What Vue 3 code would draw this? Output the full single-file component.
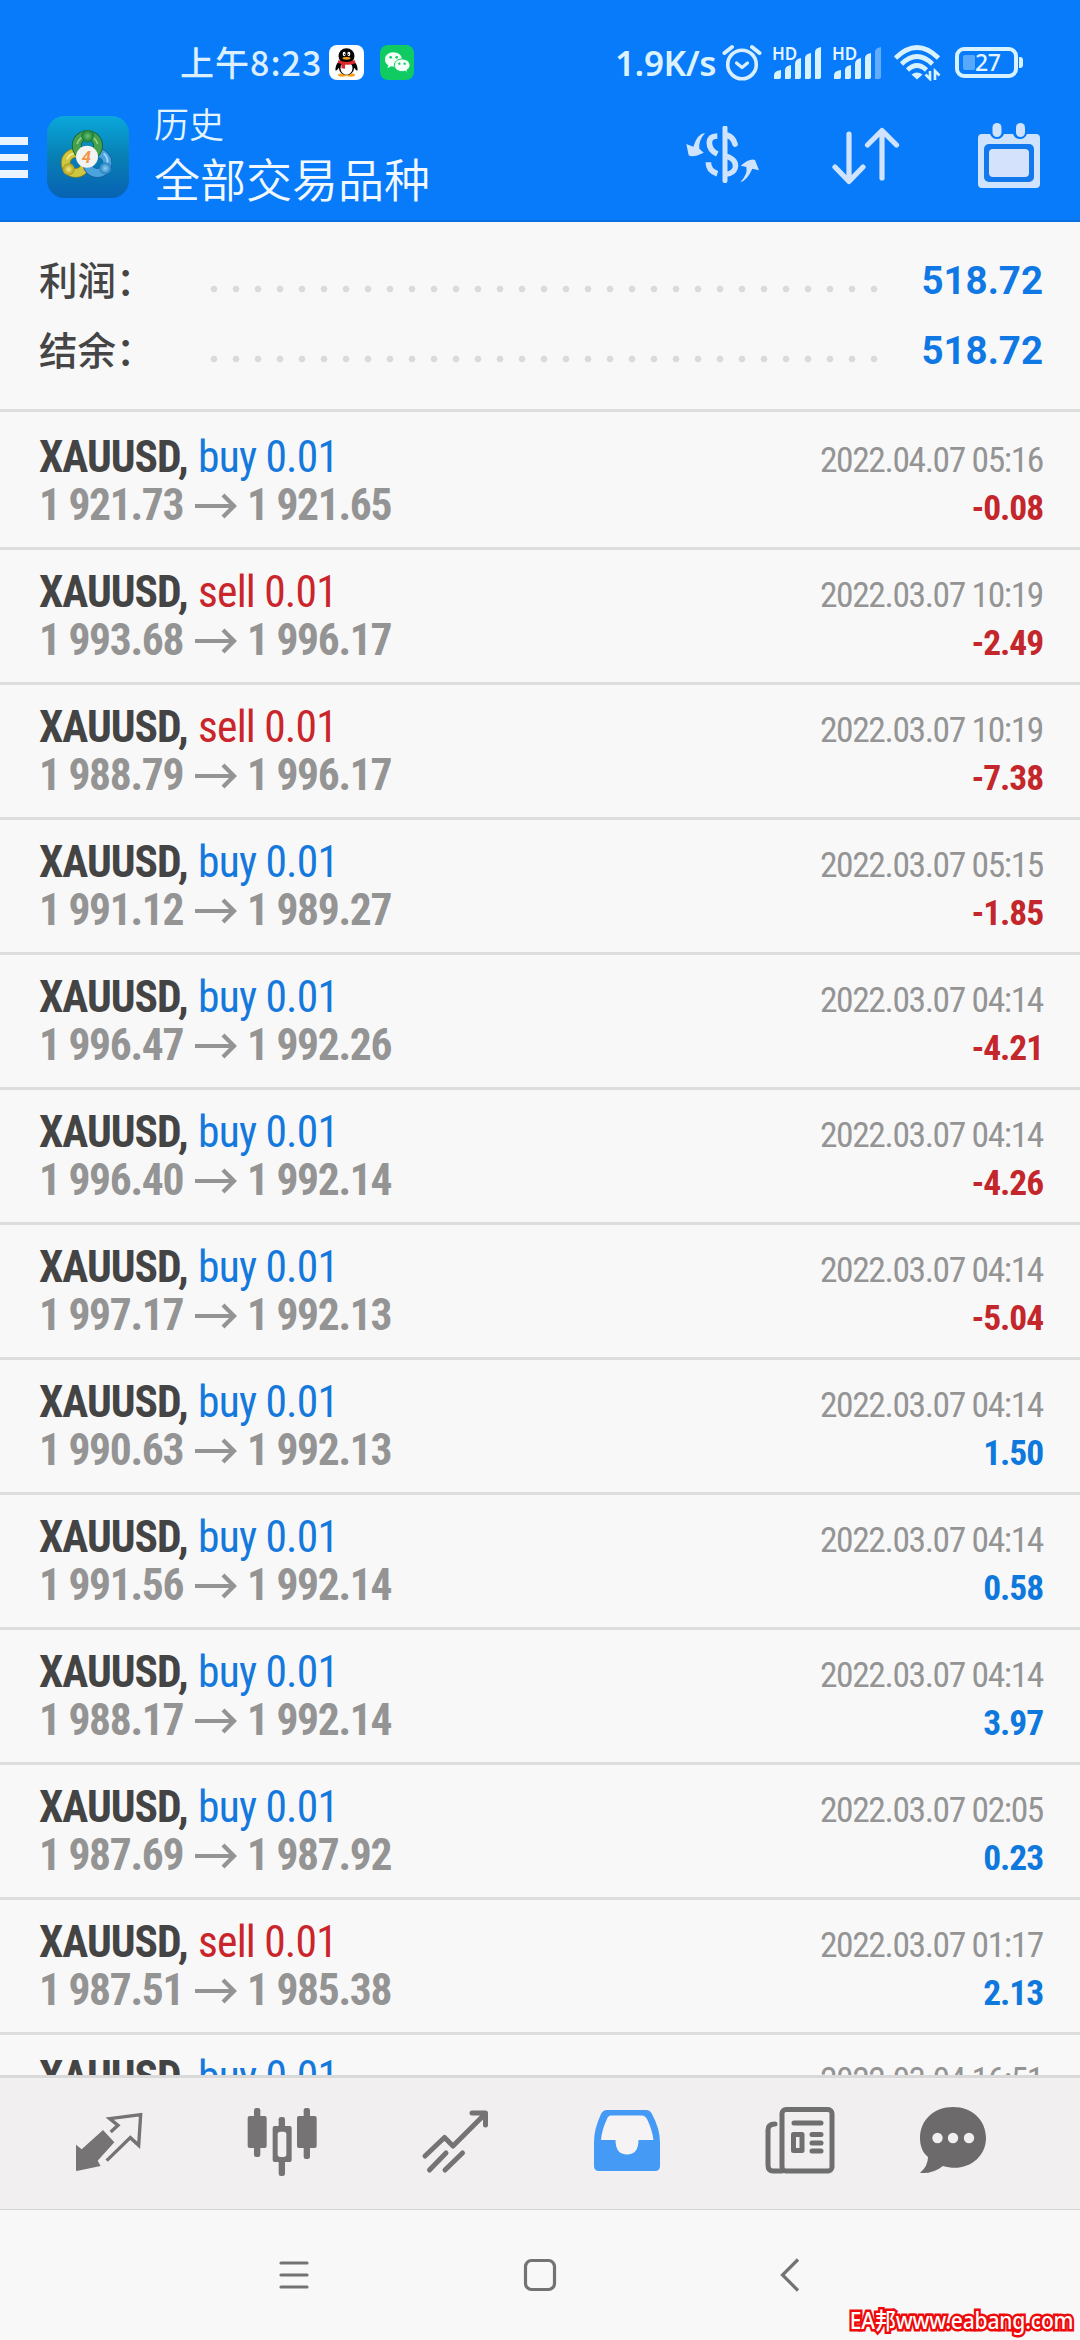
<script setup>
const summary = [
  { label: '利润：', value: '518.72' },
  { label: '结余：', value: '518.72' },
]

const deals = [
  ['buy', '1 921.73', '1 921.65', '2022.04.07 05:16', '-0.08'],
  ['sell', '1 993.68', '1 996.17', '2022.03.07 10:19', '-2.49'],
  ['sell', '1 988.79', '1 996.17', '2022.03.07 10:19', '-7.38'],
  ['buy', '1 991.12', '1 989.27', '2022.03.07 05:15', '-1.85'],
  ['buy', '1 996.47', '1 992.26', '2022.03.07 04:14', '-4.21'],
  ['buy', '1 996.40', '1 992.14', '2022.03.07 04:14', '-4.26'],
  ['buy', '1 997.17', '1 992.13', '2022.03.07 04:14', '-5.04'],
  ['buy', '1 990.63', '1 992.13', '2022.03.07 04:14', '1.50'],
  ['buy', '1 991.56', '1 992.14', '2022.03.07 04:14', '0.58'],
  ['buy', '1 988.17', '1 992.14', '2022.03.07 04:14', '3.97'],
  ['buy', '1 987.69', '1 987.92', '2022.03.07 02:05', '0.23'],
  ['sell', '1 987.51', '1 985.38', '2022.03.07 01:17', '2.13'],
].map(([side, open, close, time, profit]) => ({ side, open, close, time, profit }))

// Last deal, scrolled partly under the tab bar
const nextDeal = { side: 'buy', time: '2022.03.04 16:51' }
</script>

<template>
  <div class="screen">
    <header class="header">
      <div class="status">
        <span class="clock">上午8:23</span>
        <svg class="qq" width="35" height="35" viewBox="0 0 105 105">
          <rect width="105" height="105" rx="24" fill="#fdfefe" />
          <ellipse cx="40" cy="90" rx="13" ry="5" fill="#f6a21b" />
          <ellipse cx="65" cy="90" rx="13" ry="5" fill="#f6a21b" />
          <path d="M28 50 Q17 64 20 77 Q25 76 29 68 Q32 88 53 90 Q73 88 76 68 Q80 76 85 77 Q88 64 77 50 Z" fill="#050505" />
          <ellipse cx="52.5" cy="33" rx="24" ry="23" fill="#050505" />
          <ellipse cx="52.5" cy="70" rx="18" ry="19" fill="#fff" />
          <path d="M28 45 Q52 57 77 45 L79 55 Q65 61 48 59 L48 71 L37 70 L38 57 L27 54 Z" fill="#e0272c" />
          <ellipse cx="45.500" cy="27" rx="4.500" ry="6.500" fill="#fff" />
          <ellipse cx="59.500" cy="27" rx="4.500" ry="6.500" fill="#fff" />
          <circle cx="47" cy="28" r="2" />
          <circle cx="58" cy="28" r="2" />
          <ellipse cx="52.500" cy="40" rx="12" ry="4" fill="#f6a21b" />
        </svg>
        <svg class="wechat" width="34" height="35" viewBox="0 0 102 105">
          <rect width="102" height="105" rx="24" fill="#0fcb62" />
          <path d="M40 22 C26 22 15 31 15 44 C15 52 19 57 25 61 L22 70 L33 64 Q37 65 43 65 C57 65 66 55 66 44 C66 31 54 22 40 22 Z" fill="#f4fff8" />
          <path d="M66 42 C53 42 43 50 43 61 C43 72 53 80 66 80 Q71 80 75 78 L83 83 L81 75 C87 72 90 67 90 61 C90 50 79 42 66 42 Z" fill="#f4fff8" stroke="#0fcb62" stroke-width="3" />
          <g fill="#0fcb62"><circle cx="32" cy="37" r="4" /><circle cx="50" cy="37" r="4" /><circle cx="58" cy="56" r="3.500" /><circle cx="74" cy="56" r="3.500" /></g>
        </svg>
        <span class="speed">1.9K/s</span>
        <svg class="alarm" width="40" height="38" viewBox="0 0 40 38" fill="none" stroke="#d9efff" stroke-linecap="round" stroke-linejoin="round">
          <circle cx="20" cy="20.500" r="14.300" stroke-width="3.600" />
          <path d="M2.500 9 L10 3 M37.500 9 L30 3" stroke-width="4" />
          <path d="M14.500 19 L20 23.500 L25.500 19" stroke-width="3.200" />
        </svg>
        <div class="signal">
          <span class="hd">HD</span>
          <svg width="50" height="34" viewBox="0 0 50 34" fill="#d9f2ff">
            <path d="M2 34 V30 Q2 26 9 25 V32 Q9 34 7 34 Z M13 34 V25 Q13 21 19 20 V32 Q19 34 17 34 Z M23 34 V19 Q23 14 29 13 V32 Q29 34 27 34 Z M33 34 V13 Q33 9 39 8 V32 Q39 34 37 34 Z" />
            <path d="M43 34 V7 Q43 3 49 2 V32 Q49 34 47 34 Z" />
          </svg>
        </div>
        <div class="signal">
          <span class="hd">HD</span>
          <svg width="50" height="34" viewBox="0 0 50 34" fill="#d9f2ff">
            <path d="M2 34 V30 Q2 26 9 25 V32 Q9 34 7 34 Z M13 34 V25 Q13 21 19 20 V32 Q19 34 17 34 Z M23 34 V19 Q23 14 29 13 V32 Q29 34 27 34 Z M33 34 V13 Q33 9 39 8 V32 Q39 34 37 34 Z" />
            <path d="M43 34 V7 Q43 3 49 2 V32 Q49 34 47 34 Z" fill="#62acfb" />
          </svg>
        </div>
        <svg class="wifi" width="48" height="36" viewBox="0 0 48 36" fill="none" stroke="#d9f2ff" stroke-width="4.600">
          <path d="M1.500 13 Q23 -8 44.500 13" />
          <path d="M7.500 19 Q23 4 38.500 19" />
          <path d="M13.500 25 Q23 16 32.500 25" />
          <path d="M17.500 29.500 Q23 25.500 28.500 29.500 L23 34.500 Z" fill="#d9f2ff" stroke="none" />
          <path d="M36 26 V34 L31.500 29.500 M41 35 V26 L45.500 30.500" stroke-width="2.600" />
        </svg>
        <div class="battery"><i></i><span>27</span></div>
      </div>

      <div class="toolbar">
        <div class="burger"><i></i><i></i><i></i></div>
        <svg class="logo" width="82" height="82" viewBox="0 0 246 246">
          <defs>
            <linearGradient id="tile" x1="0" y1="0" x2="0" y2="1"><stop offset="0" stop-color="#0aa8dc" /><stop offset=".5" stop-color="#087fb4" /><stop offset="1" stop-color="#0862b4" /></linearGradient>
            <radialGradient id="green"><stop offset="0" stop-color="#6cc46a" /><stop offset="1" stop-color="#14783a" /></radialGradient>
            <radialGradient id="gold"><stop offset="0" stop-color="#f4ec7a" /><stop offset="1" stop-color="#a89a1c" /></radialGradient>
            <radialGradient id="sky"><stop offset="0" stop-color="#8fd0f5" /><stop offset="1" stop-color="#1f7cc0" /></radialGradient>
          </defs>
          <rect width="246" height="246" rx="52" fill="url(#tile)" />
          <g fill="none">
            <circle cx="86" cy="141" r="30" stroke="#857f22" stroke-width="29" />
            <circle cx="86" cy="141" r="30" stroke="#d0c53e" stroke-width="24" />
            <circle cx="151" cy="141" r="30" stroke="#1b5f9c" stroke-width="29" />
            <circle cx="151" cy="141" r="30" stroke="#4ba3de" stroke-width="24" />
            <circle cx="121" cy="89" r="32" stroke="#13602f" stroke-width="29" />
            <circle cx="121" cy="89" r="32" stroke="#47a04c" stroke-width="24" />
            <path d="M90 84 A32 32 0 0 1 152 84" stroke="#8bd083" stroke-width="5" />
            <path d="M60 130 A30 30 0 0 1 80 112" stroke="#f2ec8c" stroke-width="5" />
            <path d="M170 112 A32 32 0 0 1 180 145" stroke="#a8dcf8" stroke-width="5" />
          </g>
          <circle cx="122" cy="60" r="19" fill="url(#green)" />
          <circle cx="65" cy="160" r="18" fill="url(#gold)" />
          <circle cx="175" cy="157" r="18" fill="url(#sky)" />
          <circle cx="120" cy="122" r="33" fill="#f3f4f2" />
          <text x="118" y="140" text-anchor="middle" class="four">4</text>
        </svg>
        <div class="titles">
          <div class="small">历史</div>
          <div class="large">全部交易品种</div>
        </div>
        <svg class="currency" width="73" height="57" viewBox="17 32 219 171" fill="none" stroke="#cfe3fd">
          <path d="M134 38 V196" stroke-width="15" stroke-linecap="round" />
          <path d="M111 62 Q87 63 87 82 Q87 104 111 116" stroke-width="17" />
          <path d="M84 141 Q84 167 111 175" stroke-width="17" />
          <path d="M141 60 Q158 65 164 86" stroke-width="17" stroke-linecap="round" />
          <path d="M136 122 Q170 132 165 157 Q160 174 136 177" stroke-width="16" />
          <path d="M74 53 Q52 54 39 94 L18 86 L25 120 Q38 128 70 112 L57 100 Q54 76 74 53 Z" fill="#cfe3fd" stroke="none" />
          <path d="M180 201 Q201 194 216 160 L236 165 L224 134 Q208 128 181 151 L198 155 Q203 176 180 201 Z" fill="#cfe3fd" stroke="none" />
        </svg>
        <svg class="sort" width="68" height="60" viewBox="0 0 68 60" fill="none" stroke="#cfe3fd" stroke-width="5.200" stroke-linecap="round" stroke-linejoin="round">
          <path d="M17 8 V55 M3 41 L17 55.500 L31 41" />
          <path d="M50 52 V4.500 M35.500 19 L50 4.500 L64.500 19" />
        </svg>
        <svg class="calendar" width="64" height="66" viewBox="0 0 64 66">
          <path d="M5 11 H13 Q15 16 20 16 Q25 16 27 11 H36 Q38 16 43 16 Q48 16 50 11 H59 Q63 11 63 15 V61 Q63 65 59 65 H5 Q1 65 1 61 V15 Q1 11 5 11 Z" fill="#cfe3fd" />
          <rect x="15.500" y="0" width="9" height="14" rx="4.500" fill="#cfe3fd" />
          <rect x="39" y="0" width="9" height="14" rx="4.500" fill="#cfe3fd" />
          <rect x="7" y="21" width="50" height="38" rx="5" fill="#1278ee" />
          <rect x="12" y="26" width="40" height="28" rx="4" fill="#d4e2fb" />
        </svg>
      </div>
    </header>

    <section class="summary">
      <div v-for="s in summary" :key="s.label" class="total">
        <span class="label">{{ s.label }}</span>
        <span class="dots"></span>
        <span class="amount">{{ s.value }}</span>
      </div>
    </section>

    <main class="list">
      <article v-for="(d, n) in deals" :key="n" class="deal">
        <div class="line">
          <span class="symbol">XAUUSD,</span>
          <span class="side" :class="d.side">{{ d.side }} 0.01</span>
          <span class="time">{{ d.time }}</span>
        </div>
        <div class="line">
          <span class="price">{{ d.open }}</span>
          <svg class="arrow" width="42" height="26" viewBox="0 0 42 26" fill="none" stroke="#949494" stroke-width="4.200"><path d="M0 13 H39 M28 2 L39 13 L28 24" /></svg>
          <span class="price">{{ d.close }}</span>
          <span class="profit" :class="{ loss: d.profit.startsWith('-') }">{{ d.profit }}</span>
        </div>
      </article>
      <article class="deal">
        <div class="line">
          <span class="symbol">XAUUSD,</span>
          <span class="side" :class="nextDeal.side">{{ nextDeal.side }} 0.01</span>
          <span class="time">{{ nextDeal.time }}</span>
        </div>
      </article>
    </main>

    <nav class="tabs">
      <svg width="70" height="70" viewBox="42 36 210 210" fill="#757374">
        <path d="M129 105 L163 142 L113 197 L122 213 L50 228 L48 226 V149 L65 163 Z" />
        <path d="M152 111 L174 91 L149 71 L242 59 L236 151 L211 128 L140 197" fill="none" stroke="#757374" stroke-width="10" />
      </svg>
      <svg width="70" height="70" viewBox="558 36 210 210" fill="#757374">
        <rect x="579" y="39" width="19" height="147" rx="7" /><rect x="560" y="63" width="57" height="96" rx="6" />
        <rect x="653" y="66" width="19" height="177" rx="7" /><rect x="635" y="93" width="57" height="108" rx="6" />
        <rect x="728" y="39" width="19" height="153" rx="7" /><rect x="708" y="63" width="59" height="96" rx="6" />
        <rect x="650" y="110" width="26" height="76" rx="8" fill="#f1efef" />
      </svg>
      <svg width="70" height="70" viewBox="0 0 70 70" fill="none" stroke="#757374" stroke-width="5" stroke-linecap="round" stroke-linejoin="round">
        <path d="M5 49 L24.500 30.500 L33 39 L65 7 M52 6 H65.500 V18" /><path d="M9.500 63 L26 46 M25 63 L42.500 46" />
      </svg>
      <svg width="70" height="70" viewBox="0 0 70 70">
        <path d="M15 3 H54 Q58 3 60 7 Q68 22 68 35 V59 Q68 64 63 64 H7 Q2 64 2 59 V35 Q2 22 9 7 Q11 3 15 3 Z" fill="#459af5" />
        <path d="M19 8.500 H50 Q53 8.500 55 12 Q60 22 61.500 33 H46.500 Q46.500 47.500 35 47.500 Q23.500 47.500 23.500 33 H9 Q10 22 15 12 Q16 8.500 19 8.500 Z" fill="#f5f3f3" />
      </svg>
      <svg width="70" height="70" viewBox="0 0 70 70" fill="none" stroke="#6f6f6f" stroke-width="5" stroke-linejoin="round">
        <path d="M17 64 H8 Q3 64 3 58 V23 Q3 17 10 17" stroke-linecap="round" />
        <rect x="17" y="2.500" width="50" height="61.500" rx="4" />
        <path d="M29 16 H56 M47 27.500 H56 M47 36 H56 M47 44 H56" stroke-linecap="round" />
        <rect x="28.500" y="27.500" width="8.500" height="16" />
      </svg>
      <svg width="70" height="70" viewBox="0 0 70 70">
        <path d="M34 0 C53 0 67 13 67 31 C67 52 46 66 24 59 Q14 67 1 66 Q9 59 9 50 C3 45 1 38 1 31 C1 13 15 0 34 0 Z" fill="#6c6a6b" />
        <g fill="#f1efef"><circle cx="18.500" cy="31" r="5.200" /><circle cx="34" cy="31" r="5.200" /><circle cx="50" cy="31" r="5.200" /></g>
      </svg>
    </nav>

    <footer class="system">
      <svg width="32" height="34" viewBox="0 0 32 34" stroke="#737373" stroke-width="3.200" stroke-linecap="round"><path d="M3 5 H29 M3 17 H29 M3 29 H29" /></svg>
      <svg width="34" height="34" viewBox="0 0 34 34" fill="none" stroke="#737373" stroke-width="3.200"><rect x="2.500" y="2.500" width="29" height="29" rx="6" /></svg>
      <svg width="22" height="34" viewBox="0 0 22 34" fill="none" stroke="#737373" stroke-width="3.200"><path d="M19 1.500 L3.500 17 L19 32.500" /></svg>
      <span class="watermark">EA邦www.eabang.com</span>
    </footer>
  </div>
</template>

<style>
body { margin: 0; }
</style>

<style scoped>
.screen {
  width: 1080px;
  height: 2340px;
  overflow: hidden;
  display: flex;
  flex-direction: column;
  background: #f8f8f8;
  font-family: Roboto, "Noto Sans CJK SC", sans-serif;
}
svg { display: block; flex: none; }
span, .small, .large { white-space: nowrap; }

.header {
  height: 222px;
  flex: none;
  box-sizing: border-box;
  background: #077bfa;
  border-bottom: 2px solid #0a6fe0;
  color: #e4f4ff;
}
.status {
  height: 36px;
  padding-top: 45px;
  padding-left: 180px;
  display: flex;
}
.clock {
  width: 149px;
  font: 500 34px/34px "Noto Sans CJK SC", sans-serif;
  letter-spacing: 1px;
  color: #dcefff;
}
.wechat { margin-left: 16px; }
.speed {
  width: 107px;
  margin-left: 201px;
  font: 600 35px/35px "Noto Sans", sans-serif;
  letter-spacing: -0.4px;
  color: #dcf2ff;
}
.alarm { margin-top: -1px; }
.signal { position: relative; width: 50px; margin-left: 10px; }
.hd {
  position: absolute;
  top: 1px;
  left: 0;
  font: 600 17px/15px "Noto Sans", sans-serif;
}
.wifi { margin-left: 12px; }
.battery {
  position: relative;
  box-sizing: border-box;
  width: 63px;
  height: 31px;
  margin: 2px 0 0 13px;
  border: 4px solid #d9f2ff;
  border-radius: 9px;
  display: flex;
  align-items: center;
}
.battery::after {
  content: "";
  position: absolute;
  right: -9px;
  top: 6px;
  width: 4px;
  height: 11px;
  border-radius: 0 3px 3px 0;
  background: #d9f2ff;
}
.battery i { width: 12px; height: 15px; margin-left: 4px; border-radius: 2px; background: #58a8fb; }
.battery span { font: 500 23px/23px "Noto Sans", sans-serif; letter-spacing: -0.5px; }

.toolbar { display: flex; align-items: flex-start; padding-top: 26px; }
.burger { width: 28px; padding-top: 30px; display: flex; flex-direction: column; gap: 9px; }
.burger i { height: 7.6px; background: #eaf4fe; }
.logo { margin: 9px 0 0 19px; }
.four { font: italic 700 50px Roboto, sans-serif; fill: #f0954a; }
.titles { width: 280px; margin: -2px 0 0 25px; font-family: "Noto Sans CJK SC", sans-serif; font-weight: 350; }
.small { font-size: 35px; line-height: 36px; }
.large { margin-top: 9px; font-size: 46px; line-height: 54px; color: #f1f8ff; }
.currency { margin: 19px 0 0 252px; }
.sort { margin: 19px 0 0 73px; }
.calendar { margin: 16px 0 0 77px; }

.summary { height: 187px; flex: none; box-sizing: border-box; padding: 23px 37px 0 39px; }
.total { height: 70px; display: flex; align-items: center; }
.label {
  width: 171px;
  font: 500 38.5px/66px "Noto Sans CJK SC", sans-serif;
  height: 70px;
  color: #454545;
}
.dots {
  width: 682px;
  height: 8px;
  margin-top: 17px;
  background: radial-gradient(circle at center, #dadada 2.8px, transparent 3.8px) 0 0 / 22px 8px repeat-x;
  margin-left: -7px;
}
.amount {
  flex: 1;
  text-align: right;
  font-weight: 700;
  font-size: 38.500px;
  line-height: 73px;
  color: #1078e4;
}

.list { flex: none; height: 1666px; overflow: hidden; border-top: 3px solid #dcdede; box-sizing: border-box; }
.deal {
  height: 135px;
  box-sizing: border-box;
  padding: 19px 37px 0 39px;
  border-bottom: 3px solid #dcdede;
  font-family: "Roboto Condensed", Roboto, sans-serif;
}
.deal:first-child { height: 138px; padding-top: 22px; }
.line { height: 48px; line-height: 48px; display: flex; align-items: baseline; }
.symbol, .price { font-size: 43.5px; font-weight: 700; color: #444; }
.symbol { width: 159px; letter-spacing: -1px; }
.side { font-size: 43.5px; letter-spacing: -0.8px; }
.buy { color: #1478dc; }
.sell { color: #c9252b; }
.time, .profit { margin-left: auto; font-size: 35.5px; }
.time { color: #949494; letter-spacing: -1.4px; }
.price { width: 156px; color: #949494; letter-spacing: -1.3px; }
.arrow { margin-right: 10px; align-self: center; }
.profit { font-weight: 700; color: #0f78dc; letter-spacing: -1.1px; }
.profit.loss { color: #c3272c; }

.tabs {
  height: 135px;
  flex: none;
  box-sizing: border-box;
  border-top: 3px solid #d9d9d9;
  border-bottom: 1px solid #d6d6d6;
  background: #f1efef;
  padding: 29px 0 0 74px;
  display: flex;
}
.tabs svg + svg { margin-left: 102.8px; }
.tabs svg + svg:last-child { margin-left: 84px; }
.system { position: relative; flex: 1; display: flex; padding: 48px 0 0 278px; }
.system svg + svg { margin-left: 213px; }
.system svg + svg + svg { margin-left: 222px; }
.watermark {
  position: absolute;
  right: 7px;
  bottom: 6px;
  font: 500 23px/28px "Noto Sans", "Noto Sans CJK SC", sans-serif;
  color: #fff;
  -webkit-text-stroke: 5px #ee0a0a;
  paint-order: stroke fill;
  letter-spacing: -0.2px;
  transform: scaleX(0.915);
  transform-origin: right center;
}
</style>
